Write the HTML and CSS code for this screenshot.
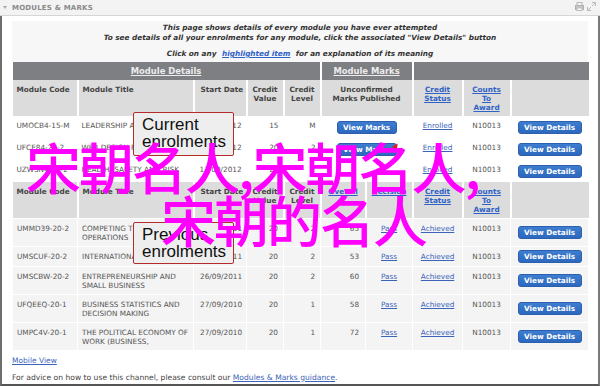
FILE: index.html
```html
<!DOCTYPE html>
<html lang="en" dir="ltr">
<head>
<title>Modules &amp; Marks</title>
<link rel="stylesheet" href="styles.css">
</head>
<body>
<div class="portlet">
  <div class="portlet-title">
    <span class="toggle"></span>
    <span class="title-text">MODULES &amp; MARKS</span>
    <span class="tools">
      <svg width="9" height="9" viewBox="0 0 9 9"><rect x="2" y="0.5" width="5" height="3" fill="none" stroke="#b8b8b8"/><rect x="0.5" y="3.5" width="8" height="4" fill="#c8c8c8" stroke="#b0b0b0"/><rect x="2" y="6" width="5" height="2.5" fill="#fff" stroke="#b8b8b8"/></svg>
      <svg width="9" height="9" viewBox="0 0 9 9"><path d="M5 0.5h3.5v3.5M8.5 0.5L5 4M4 8.5H0.5V5M0.5 8.5L4 5" fill="none" stroke="#bbb"/></svg>
    </span>
  </div>
  <div class="portlet-body">
    <div class="intro">
      <p>This page shows details of every module you have ever attempted<br>To see details of all your enrolments for any module, click the associated "View Details" button</p>
      <p class="hint">Click on any <a href="#">highlighted item</a> for an explanation of its meaning</p>
    </div>
    <table class="marks">
      <colgroup>
        <col style="width:65px"><col style="width:116px"><col style="width:53px"><col style="width:37px"><col style="width:37px">
        <col style="width:45px"><col style="width:47px"><col style="width:50px"><col style="width:48px"><col style="width:78px">
      </colgroup>
      <tr class="group">
        <th colspan="5"><a href="#">Module Details</a></th>
        <th colspan="2"><a href="#">Module Marks</a></th>
        <th colspan="3"></th>
      </tr>
      <tr class="head">
        <th class="left">Module Code</th>
        <th class="left">Module Title</th>
        <th class="left date">Start Date</th>
        <th>Credit<br>Value</th>
        <th>Credit<br>Level</th>
        <th colspan="2">Unconfirmed<br>Marks Published</th>
        <th><a href="#">Credit<br>Status</a></th>
        <th><a href="#">Counts<br>To<br>Award</a></th>
        <th></th>
      </tr>
      <tr class="current">
        <td>UMOCB4-15-M</td>
        <td>LEADERSHIP AND CHANGE</td>
        <td class="date">17/09/2012</td>
        <td class="num">15</td>
        <td class="num">M</td>
        <td colspan="2" class="btn"><span class="button">View Marks</span></td>
        <td class="mid"><a href="#">Enrolled</a></td>
        <td class="mid">N10013</td>
        <td class="btn"><span class="button wide">View Details</span></td>
      </tr>
      <tr class="current">
        <td>UFCE84-20-2</td>
        <td>WEB DESIGN FOR BUSINESS</td>
        <td class="date">17/09/2012</td>
        <td class="num">20</td>
        <td class="num">2</td>
        <td colspan="2" class="btn"><span class="button">View Marks<span class="flag"></span></span></td>
        <td class="mid"><a href="#">Enrolled</a></td>
        <td class="mid">N10013</td>
        <td class="btn"><span class="button wide">View Details</span></td>
      </tr>
      <tr class="current">
        <td>UZWSN4-20-2</td>
        <td>HEALTH, SAFETY AND RISK</td>
        <td class="date">17/09/2012</td>
        <td class="num">20</td>
        <td class="num">2</td>
        <td colspan="2"></td>
        <td class="mid"><a href="#">Enrolled</a></td>
        <td class="mid">N10013</td>
        <td class="btn"><span class="button wide">View Details</span></td>
      </tr>
      <tr class="head">
        <th class="left">Module Code</th>
        <th class="left">Module Title</th>
        <th class="left date">Start Date</th>
        <th>Credit<br>Value</th>
        <th>Credit<br>Level</th>
        <th><a href="#">Overall</a></th>
        <th><a href="#">Decision</a></th>
        <th><a href="#">Credit<br>Status</a></th>
        <th><a href="#">Counts<br>To<br>Award</a></th>
        <th></th>
      </tr>
      <tr class="previous">
        <td>UMMD39-20-2</td>
        <td>COMPETING THROUGH OPERATIONS</td>
        <td class="date">26/09/2011</td>
        <td class="num">20</td>
        <td class="num">2</td>
        <td class="num mark">65</td>
        <td class="mid"><a href="#">Pass</a></td>
        <td class="mid"><a href="#">Achieved</a></td>
        <td class="mid">N10013</td>
        <td class="btn"><span class="button wide">View Details</span></td>
      </tr>
      <tr class="previous">
        <td>UMSCUF-20-2</td>
        <td>INTERNATIONAL TRADE</td>
        <td class="date">26/09/2011</td>
        <td class="num">20</td>
        <td class="num">2</td>
        <td class="num mark">53</td>
        <td class="mid"><a href="#">Pass</a></td>
        <td class="mid"><a href="#">Achieved</a></td>
        <td class="mid">N10013</td>
        <td class="btn"><span class="button wide">View Details</span></td>
      </tr>
      <tr class="previous">
        <td>UMSCBW-20-2</td>
        <td>ENTREPRENEURSHIP AND SMALL BUSINESS</td>
        <td class="date">26/09/2011</td>
        <td class="num">20</td>
        <td class="num">2</td>
        <td class="num mark">60</td>
        <td class="mid"><a href="#">Pass</a></td>
        <td class="mid"><a href="#">Achieved</a></td>
        <td class="mid">N10013</td>
        <td class="btn"><span class="button wide">View Details</span></td>
      </tr>
      <tr class="previous">
        <td>UFQEEQ-20-1</td>
        <td>BUSINESS STATISTICS AND DECISION MAKING</td>
        <td class="date">27/09/2010</td>
        <td class="num">20</td>
        <td class="num">1</td>
        <td class="num mark">58</td>
        <td class="mid"><a href="#">Pass</a></td>
        <td class="mid"><a href="#">Achieved</a></td>
        <td class="mid">N10013</td>
        <td class="btn"><span class="button wide">View Details</span></td>
      </tr>
      <tr class="previous">
        <td>UMPC4V-20-1</td>
        <td>THE POLITICAL ECONOMY OF WORK (BUSINESS,</td>
        <td class="date">27/09/2010</td>
        <td class="num">20</td>
        <td class="num">1</td>
        <td class="num mark">72</td>
        <td class="mid"><a href="#">Pass</a></td>
        <td class="mid"><a href="#">Achieved</a></td>
        <td class="mid">N10013</td>
        <td class="btn"><span class="button wide">View Details</span></td>
      </tr>
    </table>
    <p class="mobile"><a href="#">Mobile View</a></p>
    <p class="advice">For advice on how to use this channel, please consult our <a href="#">Modules &amp; Marks guidance</a>.</p>
  </div>
  <div class="note note-current">Current<br>enrolments</div>
  <div class="note note-previous">Previous<br>enrolments</div>
  <div class="stamp">
    <div class="stamp-line">宋朝名人,宋朝名人,</div>
    <div class="stamp-line second">宋朝的名人</div>
  </div>
</div>
</body>
</html>
```

FILE: styles.css
```css
body{margin:0; padding:0; background:#fff; font-family:"DejaVu Sans", Verdana, sans-serif; font-size:7.3px; color:#555;}

a{color:#3b64b9; text-decoration:underline;}
p{margin:0;}

/*----------------------------------------------Portlet-------------------------------------*/

.portlet{position:relative; width:600px; height:386px; overflow:hidden;}

.portlet-title{height:15px; line-height:15px; background:#f3f3f3; border-bottom:1px solid #d6d6d6; position:relative;}
.portlet-title .toggle{position:absolute; left:3px; top:6px; width:0; height:0; border-left:2px solid transparent; border-right:2px solid transparent; border-top:3px solid #aaa;}
.portlet-title .title-text{margin-left:12px; font-weight:bold; font-size:7px; color:#8a8a8a; letter-spacing:0.2px;}
.portlet-title .tools{position:absolute; right:4px; top:2px; display:flex; gap:3px;}

.portlet-body{height:370px; box-sizing:border-box; border-left:2px solid #6e6e6e; border-right:2px solid #7a7a7a; border-bottom:2px solid #555; padding:5px 10px 0 10px;}

/*----------------------------------------------Intro-------------------------------------*/

.intro{background:#f7f7f7; padding:2px 0 3px; text-align:center; font-weight:bold; font-style:italic; color:#333; line-height:10px;}
.intro .hint{margin-top:6px;}
.intro a{color:#2f62c7; padding:0 3px;}

/*----------------------------------------------Table-------------------------------------*/

.marks{width:576px; table-layout:fixed; border-collapse:collapse; font-size:7.3px;}
.marks th, .marks td{padding:0; line-height:9px; overflow:hidden;}

.marks .group th{height:18px; background:#7d7f83; border-left:2px solid #fff; text-align:center; vertical-align:middle; font-size:8.4px;}
.marks .group th:first-child{border-left:none;}
.marks .group a{color:#ececec; font-weight:bold;}

.marks .head th{height:36px; box-sizing:border-box; background:#dcdcdc; border-left:2px solid #fff; padding:5px 2px 0; vertical-align:top; text-align:center; font-weight:bold; color:#444;}
.marks .head th:first-child{border-left:none;}
.marks .head th.left{text-align:left; padding-left:4px;}
.marks .head th.date{padding-left:6px;}
.marks .head a{color:#2f62c7;}

.marks td{vertical-align:top; padding:5px 4px 4px;}
.marks td.date{padding-left:6px;}
.marks td.num{text-align:right; padding-right:5px;}
.marks td.mark{padding-right:6px;}
.marks td.mid{text-align:center; padding-left:0; padding-right:0;}
.marks td.btn{text-align:center; vertical-align:middle; padding:0;}

.marks .current td{height:22px; box-sizing:border-box; background:#fff;}
.marks .current td.btn{padding-top:1px;}
.marks .previous td{height:20px; box-sizing:border-box; background:#f4f4f4; border:1px dotted #fff;}

.button{display:inline-block; position:relative; vertical-align:middle; width:60px; height:13px; line-height:11px; box-sizing:border-box; border:1px solid #2c5fae; border-radius:3px; background:linear-gradient(#3d7dd0, #2d68bd); color:#fff; font-weight:bold; font-size:7.3px; text-align:center;}
.button.wide{width:64px;}
.button .flag{position:absolute; right:-3px; top:-1px; width:0; height:0; border-left:3px solid transparent; border-right:3px solid transparent; border-bottom:6px solid #e02020; transform:rotate(35deg);}

.mobile{margin-top:5px; line-height:10px; font-size:7.5px;}
.advice{margin-top:7px; line-height:10px; font-size:7.6px; color:#444;}

/*----------------------------------------------Overlays-------------------------------------*/

.note{position:absolute; left:133px; width:101px; box-sizing:border-box; padding:3px 0 0 8px; background:#eeeeee; border:1px solid #b42b2b; border-radius:2px; font-family:"Liberation Sans", Arial, sans-serif; font-size:17px; line-height:17px; color:#111;}
.note-current{top:112px; height:44px;}
.note-previous{top:222px; height:42px;}

.stamp{position:absolute; left:26px; top:139px; font-family:"Noto Sans CJK SC", sans-serif; font-size:55px; font-weight:500; line-height:53px; color:#ff00ff; white-space:nowrap; letter-spacing:-2px;}
.stamp-line.second{padding-left:135px;}
```
